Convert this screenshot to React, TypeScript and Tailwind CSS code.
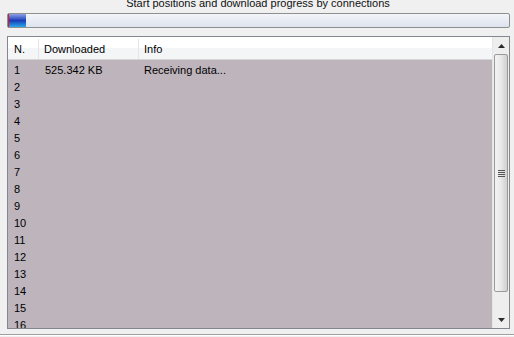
import React from "react";

const rows = Array.from({ length: 16 }, (_, i) => i + 1);

export default function App() {
  return (
    <div
      className="w-[514px] h-[337px] bg-[#f0f0f0] overflow-hidden flex flex-col text-[11px] text-black"
      style={{ fontFamily: '"Liberation Sans", Arial, sans-serif' }}
    >
      <div className="-mt-[4px] h-[14px] leading-[14px] text-center pl-[2px] text-[#111]">
        Start positions and download progress by connections
      </div>
      <div className="mt-[3px] ml-[7px] w-[503px] h-[15px] border border-[#8e8f8f] rounded-[2px] bg-gradient-to-b from-[#f3f5f9] to-[#dde3ee] flex p-0">
        <div className="w-[1px] h-full bg-[#e01a1a]" />
        <div className="w-[17px] h-full bg-gradient-to-b from-[#8fa0e6] via-[#1d3bb8] to-[#2fa6e6]" />
      </div>
      <div className="mt-[8px] ml-[7px] w-[503px] h-[293px] border border-[#828790] bg-white flex">
        <div className="flex-1 flex flex-col min-w-0">
          <div className="h-[23px] pt-[2px] flex bg-gradient-to-b from-white from-50% to-[#f4f5f7] to-50% border-b border-[#d5d5d5] shrink-0">
            <div className="w-[31px] border-r border-[#e3e5e8] pl-[6px] flex items-center">N.</div>
            <div className="w-[100px] border-r border-[#e3e5e8] pl-[5px] flex items-center">Downloaded</div>
            <div className="flex-1 pl-[5px] flex items-center">Info</div>
          </div>
          <div className="flex-1 bg-[#beb4bc] pt-[2px] overflow-hidden">
            {rows.map((n) => (
              <div key={n} className="h-[17px] flex items-center">
                <div className="w-[31px] pl-[6px]">{n}</div>
                <div className="w-[100px] pl-[6px]">{n === 1 ? "525.342 KB" : ""}</div>
                <div className="flex-1 pl-[5px]">{n === 1 ? "Receiving data..." : ""}</div>
              </div>
            ))}
          </div>
        </div>
        <div className="w-[17px] flex flex-col bg-[#eeeeee] border-l border-[#e6e6e6]">
          <div className="h-[17px] flex items-center justify-center">
            <svg width="7" height="4" viewBox="0 0 7 4">
              <path d="M3.5 0 L7 4 L0 4 Z" fill="#2b2b2b" />
            </svg>
          </div>
          <div className="flex-1 flex flex-col py-[0px]">
            <div className="mx-[1px] h-[238px] rounded-[2px] border border-[#9a9a9a] bg-gradient-to-r from-[#f4f4f4] via-[#e8e8e8] to-[#cfcfcf] flex flex-col items-center justify-center gap-[1px]">
              <div className="w-[7px] h-[1px] bg-[#555]" />
              <div className="w-[7px] h-[1px] bg-[#555]" />
              <div className="w-[7px] h-[1px] bg-[#555]" />
              <div className="w-[7px] h-[1px] bg-[#555]" />
            </div>
          </div>
          <div className="h-[17px] flex items-center justify-center">
            <svg width="7" height="4" viewBox="0 0 7 4">
              <path d="M0 0 L7 0 L3.5 4 Z" fill="#2b2b2b" />
            </svg>
          </div>
        </div>
      </div>
      <div className="mt-[5px] h-[1px] bg-[#a0a0a0]" />
      <div className="h-[1px] bg-white" />
    </div>
  );
}
